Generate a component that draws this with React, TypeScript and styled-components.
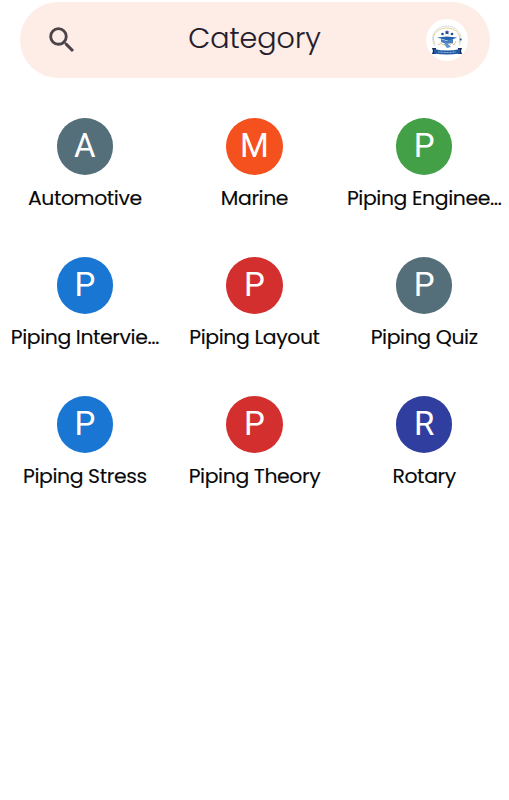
import React from "react";
import styled, { createGlobalStyle } from "styled-components";

const GlobalStyle = createGlobalStyle`
  * { box-sizing: border-box; }
  body { margin: 0; background: #fff; }
`;

const Screen = styled.main`
  width: 509px;
  height: 800px;
  padding-top: 2px;
  overflow: hidden;
  background: #fff;
  font-family: Poppins, Inter, sans-serif;
`;

const TopBar = styled.header`
  display: grid;
  grid-template-columns: 60px 1fr 60px;
  align-items: center;
  width: 470px;
  height: 76px;
  margin: 0 auto;
  padding: 0 13px;
  border-radius: 38px;
  background: #fdede6;
`;

const SearchButton = styled.button`
  display: flex;
  align-items: center;
  justify-content: center;
  width: 60px;
  height: 60px;
  padding: 0 2px 0 0;
  border: 0;
  background: transparent;
  color: #4b4347;
`;

const Title = styled.h1`
  margin: 0;
  padding-bottom: 4px;
  font-size: 28.5px;
  line-height: 40px;
  font-weight: 300;
  text-align: center;
  color: #241c2b;
  -webkit-text-stroke: 0.15px #241c2b;
`;

const LogoBadge = styled.div`
  width: 42px;
  height: 42px;
  margin-left: 9px;
  border-radius: 50%;
  background: #fff;
`;

const Grid = styled.section`
  display: grid;
  grid-template-columns: repeat(3, 169.67px);
  grid-auto-rows: 139px;
  padding-top: 40px;
`;

const Category = styled.article`
  display: flex;
  flex-direction: column;
  align-items: center;
`;

const Avatar = styled.div<{ $color: string }>`
  width: 56.5px;
  height: 56.5px;
  border-radius: 50%;
  background: ${(p) => p.$color};
  color: #fff;
  font: 400 33px/55px Roboto, sans-serif;
  text-align: center;
`;

const Label = styled.div`
  margin-top: 8px;
  font-size: 20.4px;
  line-height: 30px;
  letter-spacing: -0.4px;
  white-space: nowrap;
  color: #080808;
  -webkit-text-stroke: 0.12px #080808;
`;

const categories = [
  { name: "Automotive", color: "#546e7a" },
  { name: "Marine", color: "#f4511e" },
  { name: "Piping Enginee…", color: "#43a047" },
  { name: "Piping Intervie…", color: "#1976d2" },
  { name: "Piping Layout", color: "#d32f2f" },
  { name: "Piping Quiz", color: "#546e7a" },
  { name: "Piping Stress", color: "#1976d2" },
  { name: "Piping Theory", color: "#d32f2f" },
  { name: "Rotary", color: "#303f9f" },
];

const SearchIcon = () => (
  <svg width="34" height="34" viewBox="0 0 24 24" fill="currentColor">
    <path d="M15.5 14h-.79l-.28-.27A6.47 6.47 0 0 0 16 9.5 6.5 6.5 0 1 0 9.5 16c1.61 0 3.09-.59 4.23-1.57l.27.28v.79l5 4.99L20.49 19l-4.99-5zm-6 0a4.5 4.5 0 1 1 0-9 4.5 4.5 0 0 1 0 9z" />
  </svg>
);

const AcademyLogo = () => (
  <svg width="42" height="42" viewBox="0 0 42 42" fill="none">
    <path d="M9 27C2 15 12 7 21 7s18 8 12 20" stroke="#9fb2c2" strokeWidth=".6" strokeDasharray="1.5 .6" />
    <path d="M9 25C4 16 12 9 21 9s15 7 12 15" stroke="#e0cc82" strokeWidth=".9" />
    <g fill="#214d91">
      <path d="m21 11 .8 1.4 1.6.2-1.1 1.2.2 1.6-1.5-.7-1.5.7.2-1.6-1.1-1.2 1.6-.2z" />
      <circle cx="16.5" cy="15" r="1.3" />
      <circle cx="26" cy="15" r="1.3" />
      <circle cx="34.7" cy="20.5" r="1" />
    </g>
    <path d="m11 18.5 10-1 10 1-8 3.5z" fill="#2864ad" />
    <path d="m15 20 6 2 6-2v4l-7 1-5-2z" fill="#477fbe" />
    <path d="m12 26 3-2 2 2 3-1 2 3 4-4 2 2 2-4" stroke="#dcc698" strokeWidth="1" />
    <path d="m18 25 3-1 4 4-4 1z" fill="#6393cd" />
    <path d="M6 29h4v6H6l1-3zm26 0h4l-1 3 1 3h-4z" fill="#142e58" />
    <path d="M8 30q13 3 26 0v4.5q-13 2-26 0z" fill="#205aa6" />
    <path d="M12 32.8q9 1.4 18 0" stroke="#b9cdea" strokeWidth="1" strokeDasharray="1 .5" />
  </svg>
);

export default function App() {
  return (
    <Screen>
      <GlobalStyle />
      <TopBar>
        <SearchButton aria-label="Search"><SearchIcon /></SearchButton>
        <Title>Category</Title>
        <LogoBadge><AcademyLogo /></LogoBadge>
      </TopBar>
      <Grid>
        {categories.map((item) => (
          <Category key={item.name}>
            <Avatar $color={item.color}>{item.name[0]}</Avatar>
            <Label>{item.name}</Label>
          </Category>
        ))}
      </Grid>
    </Screen>
  );
}
